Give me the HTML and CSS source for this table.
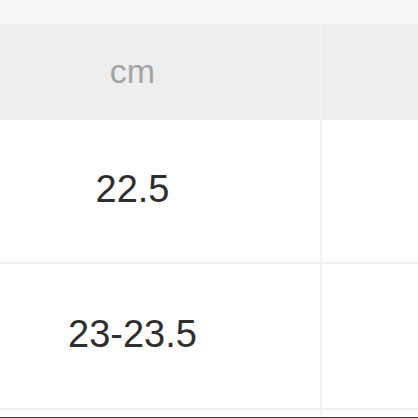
FILE: index.html
```html
<!DOCTYPE html>
<html>
<head>
<meta charset="utf-8">
<link rel="stylesheet" href="styles.css">
</head>
<body>
<div class="page">
  <div class="strip"></div>
  <div class="table">
    <div class="row head">
      <div class="cell main">cm</div>
      <div class="cell side"></div>
    </div>
    <div class="row r1">
      <div class="cell main">22.5</div>
      <div class="cell side"></div>
    </div>
    <div class="row r2">
      <div class="cell main">23-23.5</div>
      <div class="cell side"></div>
    </div>
    <div class="row tail">
      <div class="cell main"></div>
      <div class="cell side"></div>
    </div>
  </div>
  <div class="edge"></div>
</div>
</body>
</html>
```
FILE: styles.css
```css
html, body {
  margin: 0;
  padding: 0;
  background: #ffffff;
}
.page {
  width: 418px;
  height: 418px;
  overflow: hidden;
  display: flex;
  flex-direction: column;
  font-family: "Liberation Sans", Arial, sans-serif;
}
.strip {
  height: 24px;
  background: #f7f7f7;
  flex: none;
}
.table {
  display: flex;
  flex-direction: column;
  margin-left: -55px;
  flex: 1;
}
.row {
  display: grid;
  grid-template-columns: 375px 1fr;
  column-gap: 2px;
  background: #f3f3f3;
}
.cell {
  display: flex;
  align-items: center;
  justify-content: center;
  background: #ffffff;
}
.head {
  height: 96px;
  background: #f4f4f4;
}
.head .cell {
  background: #eeeeee;
  color: #a3a3a3;
  font-size: 34px;
  padding-bottom: 2px;
}
.r1 {
  height: 142px;
  border-bottom: 2px solid #f3f3f3;
}
.r1 .cell {
  color: #2e2e2e;
  font-size: 38px;
  padding-bottom: 4px;
}
.r2 {
  height: 144px;
  border-bottom: 2px solid #f3f3f3;
}
.r2 .cell {
  color: #2e2e2e;
  font-size: 38px;
  padding-bottom: 4px;
}
.tail {
  flex: 1;
}
.edge {
  height: 1px;
  background: #3a3a3a;
  flex: none;
}
```
